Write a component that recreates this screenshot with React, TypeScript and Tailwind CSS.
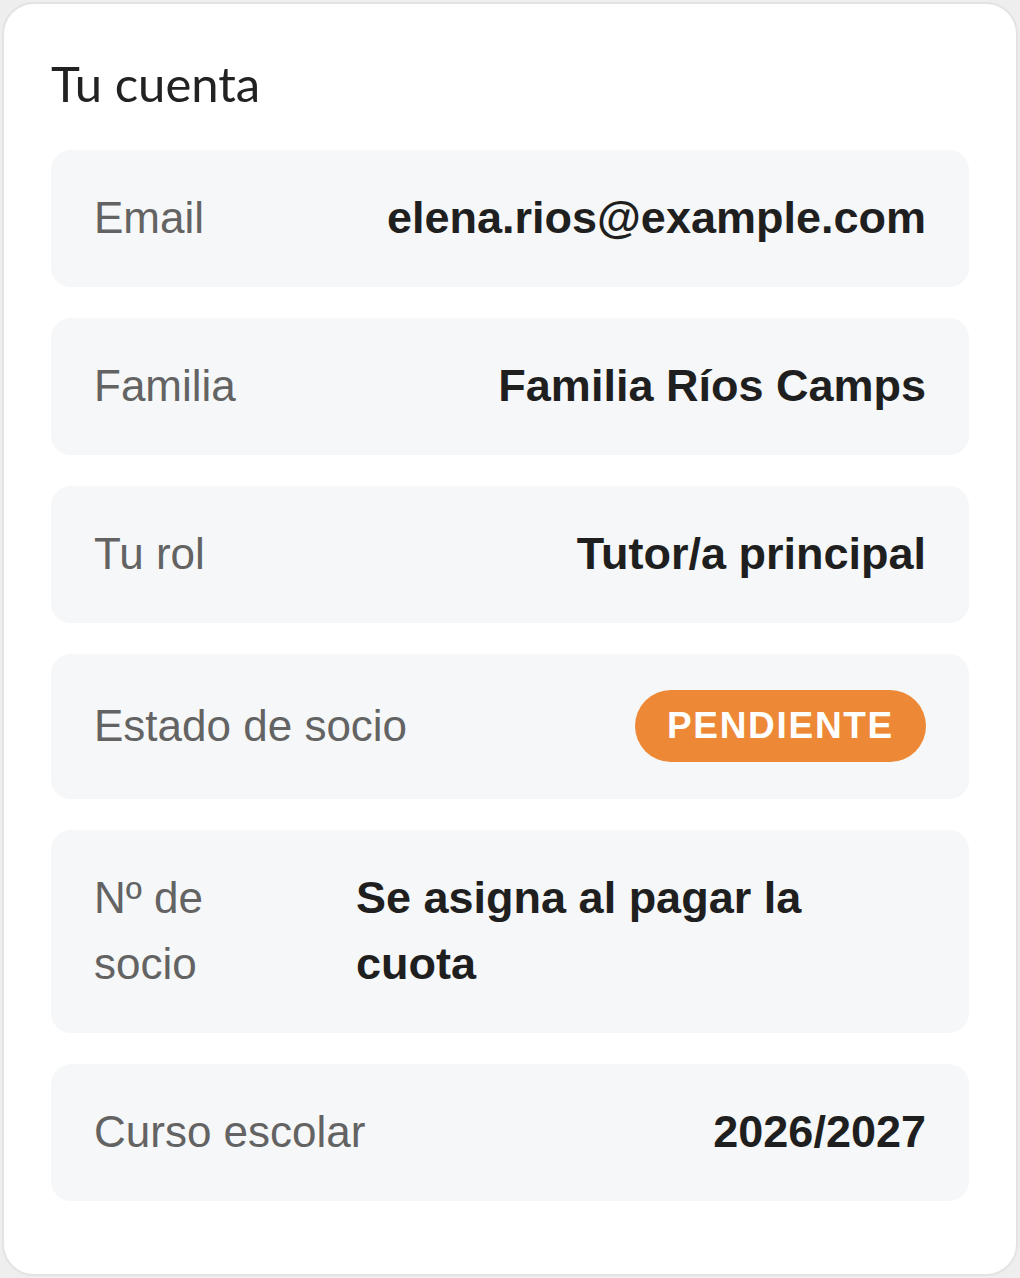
import React from 'react';

type Row = {
  label: string;
  value: React.ReactNode;
};

const rows: Row[] = [
  { label: 'Email', value: 'elena.rios@example.com' },
  { label: 'Familia', value: 'Familia Ríos Camps' },
  { label: 'Tu rol', value: 'Tutor/a principal' },
  {
    label: 'Estado de socio',
    value: (
      <span className="my-px flex h-[72px] items-center rounded-full bg-[#ed8936] px-[32px] text-[37px] font-bold uppercase tracking-[1.7px] text-white">
        Pendiente
      </span>
    ),
  },
  { label: 'Nº de socio', value: 'Se asigna al pagar la cuota' },
  { label: 'Curso escolar', value: '2026/2027' },
];

const InfoRow: React.FC<{ row: Row }> = ({ row }) => (
  <div className="flex items-center gap-12 rounded-[20px] bg-[#f6f7f8] px-[43px] py-[35.5px]">
    <span className="min-w-0 text-[44px] leading-[66px] text-[#636363]">{row.label}</span>
    <div className="ml-auto max-w-[570px] shrink-0 text-[45px] font-bold leading-[66px] text-[#1f1f1f]">
      {row.value}
    </div>
  </div>
);

export default function App() {
  return (
    <div className="min-h-screen bg-[#eeeeee] p-[2px] font-['Liberation_Sans',Arial,sans-serif]">
      <div className="flex h-[1274px] flex-col rounded-[32px] border-2 border-[#e3e3e3] bg-white px-[47px] pt-[50px]">
        <h2 className="mb-[37px] font-['Lato',sans-serif] text-[49px] leading-[1.2] text-[#222222]">
          Tu cuenta
        </h2>
        <div className="flex flex-col gap-[31px]">
          {rows.map((row) => (
            <InfoRow key={row.label} row={row} />
          ))}
        </div>
      </div>
    </div>
  );
}
